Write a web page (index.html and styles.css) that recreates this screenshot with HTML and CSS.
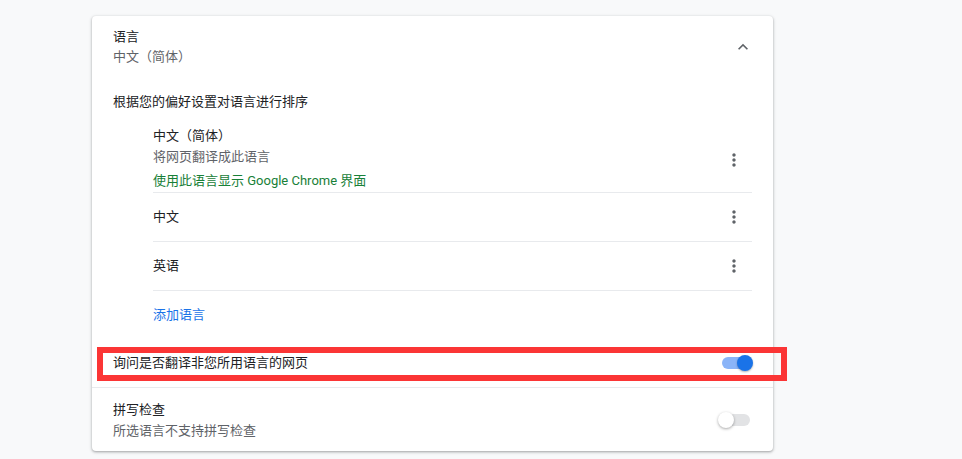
FILE: index.html
```html
<!DOCTYPE html>
<html lang="zh-CN">
<head>
<meta charset="utf-8">
<title>语言设置</title>
<link rel="stylesheet" href="styles.css">
</head>
<body>
<div class="page">
  <section class="card">
    <div class="header-row">
      <div class="two-line">
        <div class="primary">语言</div>
        <div class="secondary">中文（简体）</div>
      </div>
      <svg class="chevron" width="20" height="20" viewBox="0 0 24 24"><path d="M12 8l-6 6 1.41 1.41L12 10.83l4.59 4.58L18 14z" fill="#5f6368"/></svg>
    </div>

    <div class="sort-label primary">根据您的偏好设置对语言进行排序</div>

    <div class="lang-list">
      <div class="lang-item first">
        <div class="lang-text">
          <div class="primary l21">中文（简体）</div>
          <div class="secondary l21">将网页翻译成此语言</div>
          <div class="green">使用此语言显示 Google Chrome 界面</div>
        </div>
        <div class="kebab"><svg width="20" height="20" viewBox="0 0 24 24"><path d="M12 8c1.1 0 2-.9 2-2s-.9-2-2-2-2 .9-2 2 .9 2 2 2zm0 2c-1.1 0-2 .9-2 2s.9 2 2 2 2-.9 2-2-.9-2-2-2zm0 6c-1.1 0-2 .9-2 2s.9 2 2 2 2-.9 2-2-.9-2-2-2z" fill="#5f6368"/></svg></div>
      </div>
      <div class="lang-item">
        <div class="lang-text"><div class="primary">中文</div></div>
        <div class="kebab"><svg width="20" height="20" viewBox="0 0 24 24"><path d="M12 8c1.1 0 2-.9 2-2s-.9-2-2-2-2 .9-2 2 .9 2 2 2zm0 2c-1.1 0-2 .9-2 2s.9 2 2 2 2-.9 2-2-.9-2-2-2zm0 6c-1.1 0-2 .9-2 2s.9 2 2 2 2-.9 2-2-.9-2-2-2z" fill="#5f6368"/></svg></div>
      </div>
      <div class="lang-item">
        <div class="lang-text"><div class="primary">英语</div></div>
        <div class="kebab"><svg width="20" height="20" viewBox="0 0 24 24"><path d="M12 8c1.1 0 2-.9 2-2s-.9-2-2-2-2 .9-2 2 .9 2 2 2zm0 2c-1.1 0-2 .9-2 2s.9 2 2 2 2-.9 2-2-.9-2-2-2zm0 6c-1.1 0-2 .9-2 2s.9 2 2 2 2-.9 2-2-.9-2-2-2z" fill="#5f6368"/></svg></div>
      </div>
      <div class="add-row"><span class="link">添加语言</span></div>
    </div>

    <div class="toggle-row ask-row">
      <div class="primary">询问是否翻译非您所用语言的网页</div>
      <div class="toggle on"><span class="track"></span><span class="knob"></span></div>
      <div class="highlight"></div>
    </div>

    <div class="toggle-row spell-row">
      <div class="two-line">
        <div class="primary">拼写检查</div>
        <div class="secondary l21">所选语言不支持拼写检查</div>
      </div>
      <div class="toggle off"><span class="track"></span><span class="knob"></span></div>
    </div>
  </section>
</div>
</body>
</html>
```

FILE: styles.css
```css
* { box-sizing: border-box; }
html, body { margin: 0; padding: 0; }
body {
  background: #f8f9fa;
  font-family: Roboto, "Noto Sans CJK SC", sans-serif;
  font-size: 13px;
  line-height: 20px;
  color: #202124;
}
.page {
  padding: 16px 0 0 92px;
  height: 459px;
  overflow: hidden;
}
.card {
  width: 681px;
  background: #fff;
  border-radius: 4px;
  box-shadow: 0 1px 2px rgba(60,64,67,.3), 0 1px 3px 1px rgba(60,64,67,.15);
}
.primary { color: #202124; }
.secondary { color: #5f6368; }
.l21 { line-height: 21px; }
.green { color: #188038; margin-top: 4px; }
.link { color: #1a73e8; }

.header-row {
  height: 62px;
  display: flex;
  align-items: center;
  justify-content: space-between;
  padding: 0 20px 0 21px;
}
.chevron { display: block; }

.sort-label {
  padding: 14px 21px 0 21px;
}

.lang-list {
  margin: 13px 21px 0 61px;
}
.lang-item {
  display: flex;
  align-items: center;
  justify-content: space-between;
  min-height: 49px;
  border-bottom: 1px solid #e8eaed;
}
.lang-item.first {
  padding-bottom: 1px;
}
.kebab {
  width: 36px;
  display: flex;
  justify-content: center;
  align-items: center;
}
.lang-item.first .kebab { margin-top: 3px; }
.kebab svg { display: block; }
.add-row {
  height: 48px;
  display: flex;
  align-items: center;
}

.toggle-row {
  display: flex;
  align-items: center;
  justify-content: space-between;
  padding: 0 19px 0 21px;
}
.ask-row {
  position: relative;
  height: 49px;
  border-bottom: 1px solid #e8eaed;
}
.spell-row {
  height: 63px;
  padding-top: 1px;
}
.highlight {
  position: absolute;
  left: 5px;
  top: 8px;
  width: 690px;
  height: 34px;
  border: 6px solid #fb3535;
  pointer-events: none;
}

.toggle {
  position: relative;
  width: 34px;
  height: 16px;
}
.toggle .track {
  position: absolute;
  left: 2px;
  top: 2px;
  width: 28px;
  height: 12px;
  border-radius: 6px;
}
.toggle .knob {
  position: absolute;
  top: 0;
  width: 16px;
  height: 16px;
  border-radius: 50%;
}
.toggle.on .track { background: #8ab4f8; }
.toggle.on .knob {
  left: 17px;
  background: #1a73e8;
  box-shadow: 0 1px 2px rgba(0,0,0,.3);
}
.toggle.off .track { background: #e2e3e5; }
.toggle.off .knob {
  left: -2px;
  background: #fff;
  box-shadow: 0 1px 3px rgba(0,0,0,.35);
}
```
